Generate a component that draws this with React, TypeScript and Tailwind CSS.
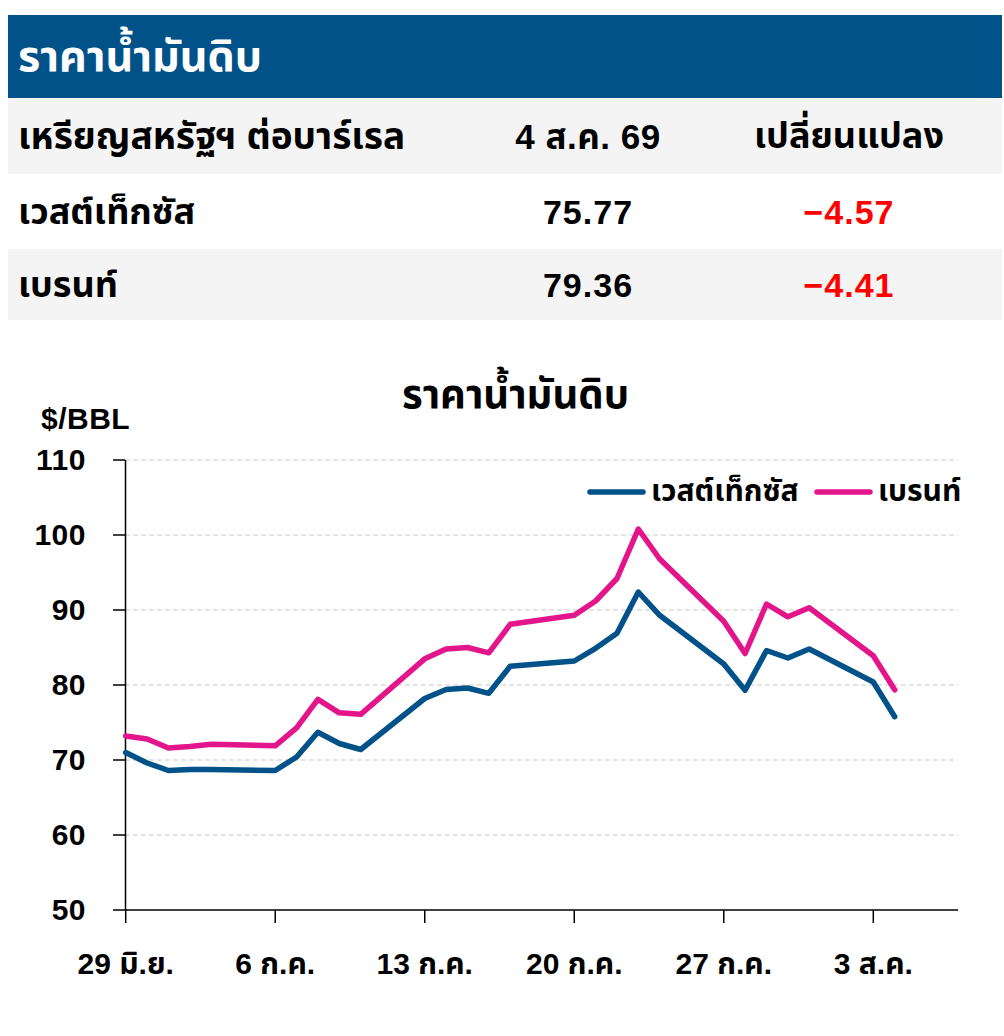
import React from "react";

const X0 = 125.7;
const DX = 21.36;
const yOf = (v: number) => 910 - (v - 50) * 7.5;

const wti: [number, number][] = [
  [0, 71.0], [1, 69.6], [2, 68.6], [3, 68.75], [4, 68.75], [7, 68.6], [8, 70.4], [9, 73.7], [10, 72.2], [11, 71.4],
  [14, 78.2], [15, 79.4], [16, 79.6], [17, 78.9], [18, 82.5], [21, 83.2], [22, 84.9], [23, 86.9], [24, 92.4], [25, 89.3],
  [28, 82.8], [29, 79.3], [30, 84.6], [31, 83.6], [32, 84.8], [35, 80.4], [36, 75.77],
];
const brent: [number, number][] = [
  [0, 73.2], [1, 72.8], [2, 71.6], [3, 71.8], [4, 72.1], [7, 71.9], [8, 74.3], [9, 78.1], [10, 76.3], [11, 76.1],
  [14, 83.5], [15, 84.8], [16, 85.0], [17, 84.3], [18, 88.1], [21, 89.3], [22, 91.2], [23, 94.2], [24, 100.8], [25, 96.8],
  [28, 88.5], [29, 84.2], [30, 90.8], [31, 89.1], [32, 90.3], [35, 83.9], [36, 79.36],
];

const pts = (d: [number, number][]) =>
  d.map(([x, v]) => `${(X0 + x * DX).toFixed(1)},${(yOf(v) - 360).toFixed(1)}`).join(" ");

const thai = "font-['Liberation_Sans','Noto_Sans_Thai','Noto_Sans',sans-serif]";

export default function App() {
  const grid = [110, 100, 90, 80, 70, 60];
  const ticks = [
    { d: 0, label: "29 มิ.ย." },
    { d: 7, label: "6 ก.ค." },
    { d: 14, label: "13 ก.ค." },
    { d: 21, label: "20 ก.ค." },
    { d: 28, label: "27 ก.ค." },
    { d: 35, label: "3 ส.ค." },
  ];
  return (
    <div className={`w-[1004px] h-[1036px] bg-white text-black ${thai} font-bold`}>
      <div className="pt-[15px] pl-[8px] pr-[2px]">
        <div className="h-[83px] bg-[#02528a] flex items-center pl-[10px]">
          <span className="text-white text-[43px] leading-none">ราคาน้ำมันดิบ</span>
        </div>
        <div className="grid grid-cols-[472px_216px_306px] text-[36px] leading-none">
          <div className="h-[76px] bg-[#f4f4f4] flex items-center pl-[10px] text-[37px]">เหรียญสหรัฐฯ ต่อบาร์เรล</div>
          <div className="h-[76px] bg-[#f4f4f4] flex items-center justify-center text-[35px] tracking-[0.5px]">4 ส.ค. 69</div>
          <div className="h-[76px] bg-[#f4f4f4] flex items-center justify-center">เปลี่ยนแปลง</div>
          <div className="h-[75px] bg-white flex items-center pl-[10px]">เวสต์เท็กซัส</div>
          <div className="h-[75px] bg-white flex items-center justify-center text-[34px] tracking-[1px]">75.77</div>
          <div className="h-[75px] bg-white flex items-center justify-center text-[34px] tracking-[1px] text-[#ff0000]">−4.57</div>
          <div className="h-[71px] bg-[#f4f4f4] flex items-center pl-[10px]">เบรนท์</div>
          <div className="h-[71px] bg-[#f4f4f4] flex items-center justify-center text-[34px] tracking-[1px]">79.36</div>
          <div className="h-[71px] bg-[#f4f4f4] flex items-center justify-center text-[34px] tracking-[1px] text-[#ff0000]">−4.41</div>
        </div>
      </div>
      <div className="relative h-[676px] mt-[40px]">
        <svg width="1004" height="676" viewBox="0 0 1004 676" className="absolute left-0 top-0">
          {grid.map((v) => (
            <line key={v} x1={125} x2={958} y1={yOf(v) - 360} y2={yOf(v) - 360} stroke="#dcdcdc" strokeWidth={1.5} strokeDasharray="5 3" />
          ))}
          <line x1={125.5} x2={125.5} y1={yOf(110) - 360} y2={910 - 360} stroke="#000" strokeWidth={1.5} />
          <line x1={113} x2={958} y1={910 - 360} y2={910 - 360} stroke="#000" strokeWidth={1.5} />
          {[110, 100, 90, 80, 70, 60].map((v) => (
            <line key={v} x1={113} x2={125} y1={yOf(v) - 360} y2={yOf(v) - 360} stroke="#000" strokeWidth={1.5} />
          ))}
          {ticks.map((t) => (
            <line key={t.d} x1={X0 + t.d * DX} x2={X0 + t.d * DX} y1={550} y2={563} stroke="#000" strokeWidth={1.5} />
          ))}
          <polyline points={pts(brent)} fill="none" stroke="#e2168a" strokeWidth={5.5} strokeLinejoin="round" strokeLinecap="round" />
          <polyline points={pts(wti)} fill="none" stroke="#02528a" strokeWidth={5.5} strokeLinejoin="round" strokeLinecap="round" />
          <line x1={590} x2={643} y1={132} y2={132} stroke="#02528a" strokeWidth={5.5} strokeLinecap="round" />
          <line x1={817} x2={870} y1={132} y2={132} stroke="#e2168a" strokeWidth={5.5} strokeLinecap="round" />
        </svg>
        <div className="absolute left-[402px] top-[14px] text-[40px] leading-none">ราคาน้ำมันดิบ</div>
        <div className="absolute left-[41px] top-[44px] text-[30px] tracking-[0.5px] leading-none">$/BBL</div>
        {[110, 100, 90, 80, 70, 60, 50].map((v) => (
          <div key={v} className="absolute right-[918px] text-[30px] tracking-[0.5px] leading-none" style={{ top: yOf(v) - 360 - 15 }}>
            {v}
          </div>
        ))}
        <div className="absolute left-[651px] top-[116px] text-[30px] leading-none">เวสต์เท็กซัส</div>
        <div className="absolute left-[878px] top-[116px] text-[30px] leading-none">เบรนท์</div>
        {ticks.map((t) => (
          <div key={t.d} className="absolute w-[180px] text-center text-[30px] leading-none" style={{ left: X0 + t.d * DX - 90, top: 589 }}>
            {t.label}
          </div>
        ))}
      </div>
    </div>
  );
}
